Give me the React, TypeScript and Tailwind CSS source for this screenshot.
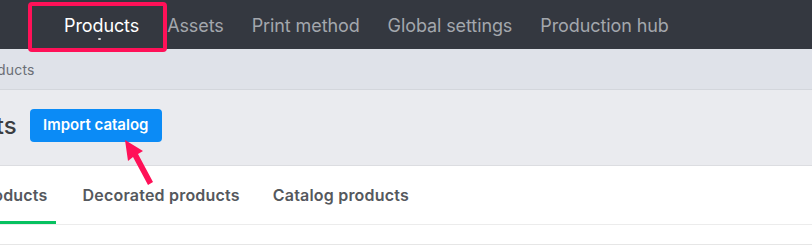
import { Fragment } from 'react'

const NAV_ITEMS = ['Products', 'Assets', 'Print method', 'Global settings', 'Production hub']

const TABS = ['All products', 'Decorated products', 'Catalog products']

function App() {
  return (
    <div className="relative h-[248px] w-[812px] overflow-hidden bg-white font-['Inter',sans-serif]">
      {/* top nav */}
      <nav className="relative flex h-[49px] items-center gap-[28px] bg-[#343840] pl-[64px] pt-[2px]">
        {NAV_ITEMS.map((item, index) => (
          <Fragment key={item}>
            <span
              className={`relative text-[18px] leading-none tracking-[-0.1px] ${
                index === 0 ? 'text-white' : 'text-[#a3a7ad]'
              }`}
            >
              {item}
              {index === 0 ? (
                <span className="absolute left-[34px] top-[21px] h-[2px] w-[3px] rounded-full bg-white/80" />
              ) : null}
            </span>
          </Fragment>
        ))}
      </nav>

      {/* breadcrumb */}
      <div className="flex h-[41px] items-center border-b border-[#d3d6dc] bg-[#dfe2e9] pt-[1px]">
        <span className="-ml-[26px] text-[14px] tracking-[0.2px] text-[#6b6f76]">Products</span>
      </div>

      {/* page header */}
      <div className="flex h-[76px] items-center gap-[13px] border-b border-[#dcdde1] bg-[#eaebef] pb-[4px]">
        <h1 className="-ml-[86px] text-[24px] font-medium text-[#3a3d42]">Products</h1>
        <button
          type="button"
          className="h-[33px] w-[132px] rounded-[4px] bg-[#0b8bf6] text-[15px] font-semibold text-white"
        >
          Import catalog
        </button>
      </div>

      {/* tabs */}
      <div className="flex h-[59px] items-stretch gap-[27px] border-b border-[#ececec] bg-white">
        {TABS.map((tab, index) => (
          <div
            key={tab}
            className={`flex items-center text-[16px] font-semibold tracking-[0.2px] text-[#55585d] ${
              index === 0 ? '-ml-[48px] border-b-[3px] border-[#07c160] pr-[8px] pt-[3px]' : ''
            } ${index === 2 ? 'ml-[6px]' : ''}`}
          >
            {tab}
          </div>
        ))}
      </div>
      <div className="h-[20px] border-b border-[#e6e6e6] bg-white" />

      {/* annotation: highlight box */}
      <div className="pointer-events-none absolute left-[28px] top-[2px] h-[50px] w-[139px] rounded-[4px] border-[4px] border-[#ff1158]" />

      {/* annotation: arrow */}
      <svg className="pointer-events-none absolute left-[115px] top-[135px]" width="50" height="55" viewBox="0 0 50 55">
        <path d="M10 5 L28 16 L23 19 L38 47 L33 50 L18 22 L13 26 Z" fill="#ff1158" />
      </svg>
    </div>
  )
}

export default App
